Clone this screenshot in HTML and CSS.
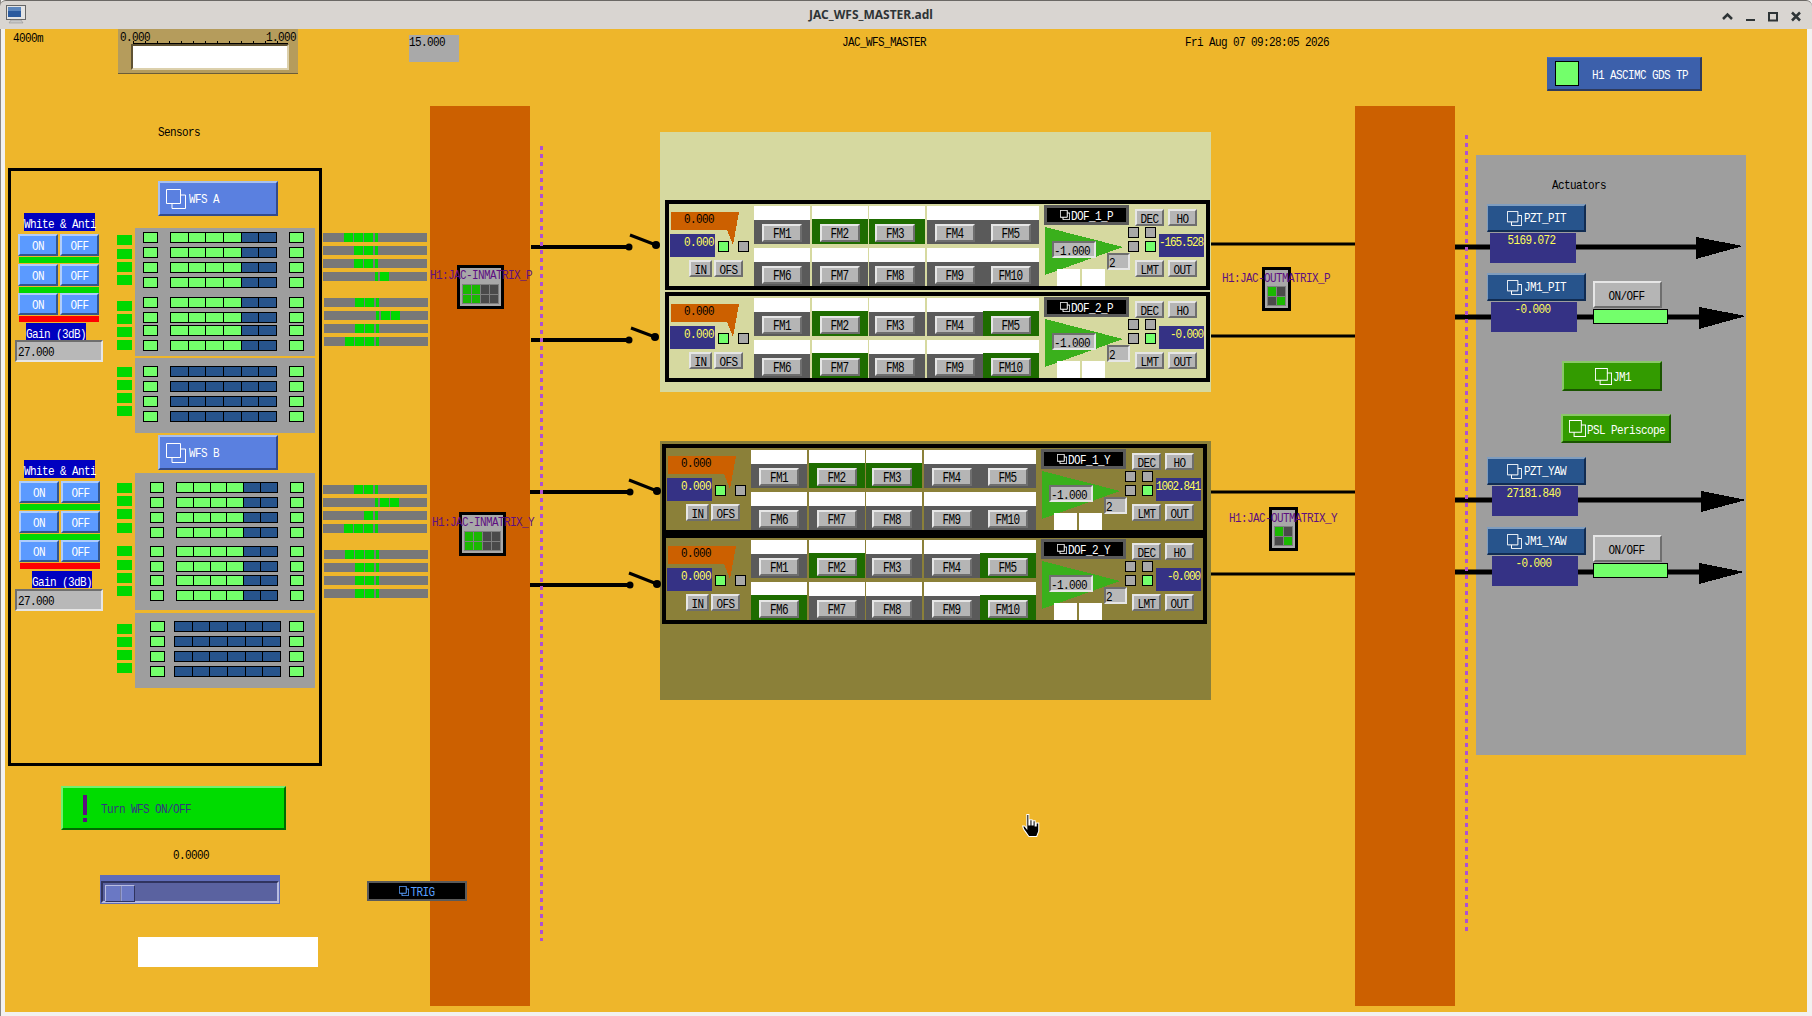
FILE: index.html
```html
<!DOCTYPE html>
<html lang="en">
<head>
    <meta charset="UTF-8">
    <title>JAC_WFS_MASTER.adl</title>
    <link rel="stylesheet" href="styles.css">
</head>
<body>
<svg class="defs" width="0" height="0">
    <symbol id="rel" viewBox="0 0 20 20">
        <path d="M0.5 0.5H14.5V14.5H0.5ZM6 14.5V19.5H19.5V6H14.5" fill="none" stroke="currentColor" vector-effect="non-scaling-stroke"/>
    </symbol>
</svg>
<div class="window">
    <header class="titlebar">
        <svg class="win-icon" width="20" height="20" viewBox="0 0 20 20">
            <rect x="0.5" y="0.5" width="19" height="14" fill="#e4e4e4" stroke="#666"/>
            <rect x="2" y="2" width="13" height="10" fill="#2b5a9e"/>
            <rect x="2" y="2" width="13" height="4" fill="#5c86bd"/>
            <path d="M5 15h10l2 3H3z" fill="#c8c8c8" stroke="#888" stroke-width="0.5"/>
        </svg>
        <div class="win-title">JAC_WFS_MASTER.adl</div>
        <div class="win-controls">
            <svg width="23" height="29" viewBox="0 0 23 29"><path d="M7 18l4.500-4.500L16 18" fill="none" stroke="#2e3436" stroke-width="2.500"/></svg>
            <svg width="23" height="29" viewBox="0 0 23 29"><path d="M7 19h9" stroke="#2e3436" stroke-width="2"/></svg>
            <svg width="23" height="29" viewBox="0 0 23 29"><rect x="7" y="12" width="8" height="7.500" fill="none" stroke="#2e3436" stroke-width="2"/></svg>
            <svg width="23" height="29" viewBox="0 0 23 29"><path d="M7 11.500l8 8M15 11.500l-8 8" stroke="#2e3436" stroke-width="2.500"/></svg>
        </div>
    </header>

    <main class="display">
        <!-- top row -->
        <div class="lbl lbl-site">4000m</div>
        <div class="meter">
            <div class="meter-scale"><span class="t">0.000</span><span class="t">1.000</span></div>
            <div class="meter-ticks"></div>
            <div class="meter-face"></div>
        </div>
        <div class="gray-val"><span class="t">15.000</span></div>
        <div class="lbl lbl-name">JAC_WFS_MASTER</div>
        <div class="lbl lbl-date">Fri Aug 07 09:28:05 2026</div>
        <div class="btn-gds"><span class="ind ind-gds"></span><span class="t">H1 ASCIMC GDS TP</span></div>

        <!-- backgrounds -->
        <div class="column column-in"></div>
        <div class="column column-out"></div>
        <div class="panel-act"></div>
        <div class="bank-panel panel-p" id="panel-p"></div>
        <div class="bank-panel panel-y" id="panel-y"></div>

        <svg class="wires" viewBox="0 0 1812 1016">
            <g stroke="#000" stroke-width="4">
                <path d="M531 247H629M531 340H629M530 492H630M530 585H630"/>
            </g>
            <g stroke="#000" stroke-width="3">
                <path d="M630 235L656 245M631 328L655 337M629 480L657 491M629 573L657 584"/>
                <path d="M1211 244H1355M1211 336H1355M1211 492H1355M1211 574H1355"/>
            </g>
            <g fill="#000">
                <circle cx="629" cy="247" r="3.500"/><circle cx="656" cy="245" r="4"/>
                <circle cx="629" cy="340" r="3.500"/><circle cx="655" cy="337" r="4"/>
                <circle cx="630" cy="492" r="3.500"/><circle cx="657" cy="491" r="4"/>
                <circle cx="630" cy="585" r="3.500"/><circle cx="657" cy="584" r="4"/>
            </g>
            <g stroke="#000" stroke-width="5">
                <path d="M1455 247H1700M1455 317H1703M1455 500H1705M1455 572H1703"/>
            </g>
            <g fill="#000" shape-rendering="crispEdges">
                <polygon points="1696,237 1743,246 1696,259"/>
                <polygon points="1699,307 1746,316 1699,329"/>
                <polygon points="1701,491 1746,500 1701,512"/>
                <polygon points="1699,563 1744,572 1699,584"/>
            </g>
            <g stroke="#ae50d2" stroke-width="3" stroke-dasharray="4 4">
                <path d="M541.500 146V941M1466.500 135V931"/>
            </g>
        </svg>

        <!-- sensors -->
        <div class="lbl lbl-sensors">Sensors</div>
        <div class="sensor-frame"></div>
        <div class="btn-blue btn-wfs-a"><svg class="rel rel-wfs"><use href="#rel"/></svg><span class="t">WFS A</span></div>
        <div class="btn-blue btn-wfs-b"><svg class="rel rel-wfs"><use href="#rel"/></svg><span class="t">WFS B</span></div>

        <div class="ctrl ctrl-a">
            <div class="ctrl-title"><span class="t">White &amp; Anti</span></div>
            <div class="onoff"><div class="btn-on"><span class="t">ON</span></div><div class="btn-on btn-off"><span class="t">OFF</span></div></div>
            <div class="state"></div>
            <div class="onoff"><div class="btn-on"><span class="t">ON</span></div><div class="btn-on btn-off"><span class="t">OFF</span></div></div>
            <div class="state state-tight"></div>
            <div class="onoff"><div class="btn-on"><span class="t">ON</span></div><div class="btn-on btn-off"><span class="t">OFF</span></div></div>
            <div class="state state-red"></div>
            <div class="ctrl-gain"><span class="t">Gain (3dB)</span></div>
            <div class="input input-gain"><span class="t">27.000</span></div>
        </div>
        <div class="ctrl ctrl-b">
            <div class="ctrl-title"><span class="t">White &amp; Anti</span></div>
            <div class="onoff"><div class="btn-on"><span class="t">ON</span></div><div class="btn-on btn-off"><span class="t">OFF</span></div></div>
            <div class="state"></div>
            <div class="onoff"><div class="btn-on"><span class="t">ON</span></div><div class="btn-on btn-off"><span class="t">OFF</span></div></div>
            <div class="state state-tight"></div>
            <div class="onoff"><div class="btn-on"><span class="t">ON</span></div><div class="btn-on btn-off"><span class="t">OFF</span></div></div>
            <div class="state state-red"></div>
            <div class="ctrl-gain"><span class="t">Gain (3dB)</span></div>
            <div class="input input-gain"><span class="t">27.000</span></div>
        </div>

        <div class="side side-a" id="side-a"></div>
        <div class="side side-b" id="side-b"></div>
        <div class="sens sens-a1" id="sens-a1"></div>
        <div class="sens sens-a2" id="sens-a2"></div>
        <div class="sens sens-b1" id="sens-b1"></div>
        <div class="sens sens-b2" id="sens-b2"></div>
        <div class="strips strips-a1" id="strips-a1"></div>
        <div class="strips strips-a2" id="strips-a2"></div>
        <div class="strips strips-b1" id="strips-b1"></div>
        <div class="strips strips-b2" id="strips-b2"></div>

        <!-- matrices -->
        <div class="matrix matrix-in matrix-in-p"><div class="mx-grid mx-4"><i class="on"></i><i class="on"></i><i></i><i></i><i class="on"></i><i class="on"></i><i></i><i></i></div></div>
        <div class="matrix matrix-in matrix-in-y"><div class="mx-grid mx-4"><i class="on"></i><i class="on"></i><i></i><i></i><i class="on"></i><i class="on"></i><i></i><i></i></div></div>
        <div class="matrix matrix-out matrix-out-p"><div class="mx-grid mx-2"><i class="on"></i><i></i><i></i><i class="on"></i></div></div>
        <div class="matrix matrix-out matrix-out-y"><div class="mx-grid mx-2"><i class="on"></i><i></i><i></i><i class="on"></i></div></div>
        <div class="lbl lbl-mx lbl-in-p">H1:JAC-INMATRIX_P</div>
        <div class="lbl lbl-mx lbl-in-y">H1:JAC-INMATRIX_Y</div>
        <div class="lbl lbl-mx lbl-out-p">H1:JAC-OUTMATRIX_P</div>
        <div class="lbl lbl-mx lbl-out-y">H1:JAC-OUTMATRIX_Y</div>

        <!-- actuators -->
        <div class="lbl lbl-act">Actuators</div>
        <div class="btn-act btn-pzt-pit"><svg class="rel rel-act"><use href="#rel"/></svg><span class="t">PZT_PIT</span></div>
        <div class="act-val val-pzt-pit"><span class="t">5169.072</span></div>
        <div class="btn-act btn-jm1-pit"><svg class="rel rel-act"><use href="#rel"/></svg><span class="t">JM1_PIT</span></div>
        <div class="act-val val-jm1-pit"><span class="t">-0.000</span></div>
        <div class="btn btn-onoff btn-onoff-pit"><span class="t">ON/OFF</span></div>
        <div class="ind ind-act ind-act-pit"></div>
        <div class="btn-green btn-jm1"><svg class="rel rel-green"><use href="#rel"/></svg><span class="t">JM1</span></div>
        <div class="btn-green btn-psl"><svg class="rel rel-green"><use href="#rel"/></svg><span class="t">PSL Periscope</span></div>
        <div class="btn-act btn-pzt-yaw"><svg class="rel rel-act"><use href="#rel"/></svg><span class="t">PZT_YAW</span></div>
        <div class="act-val val-pzt-yaw"><span class="t">27181.840</span></div>
        <div class="btn-act btn-jm1-yaw"><svg class="rel rel-act"><use href="#rel"/></svg><span class="t">JM1_YAW</span></div>
        <div class="act-val val-jm1-yaw"><span class="t">-0.000</span></div>
        <div class="btn btn-onoff btn-onoff-yaw"><span class="t">ON/OFF</span></div>
        <div class="ind ind-act ind-act-yaw"></div>

        <!-- bottom left -->
        <div class="btn-turn"><span class="bang"><i></i><i></i></span><span class="t">Turn WFS ON/OFF</span></div>
        <div class="lbl lbl-zero">0.0000</div>
        <div class="slider"><div class="trough"><div class="thumb"></div></div></div>
        <div class="btn-trig"><svg class="rel rel-small"><use href="#rel"/></svg><span class="t">TRIG</span></div>
        <div class="white-box"></div>

        <svg class="hand" width="22" height="25" viewBox="0 0 20 24">
            <path d="M5 1.500h2v10h1V6.500h2v5h1V7.500h2v5h1V9.500h2.500v8l-2 5H7l-5-7-1-3h2l2 2.500z" fill="#000" stroke="#fff"/>
        </svg>
    </main>
</div>
<script src="script.js"></script>
</body>
</html>
```

FILE: styles.css
```css
* {
    box-sizing: border-box;
}
body {
    margin: 0;
    background-color: #f2f1f0;
    font-family: "Liberation Mono", monospace;
    font-size: 11px;
    letter-spacing: -0.6px;
    line-height: 12px;
    color: #000;
}
.defs {
    position: absolute;
}
/* .display stays static so that canvas items are placed in window coordinates */
.window {
    position: relative;
    width: 1812px;
    height: 1016px;
    display: flex;
    flex-direction: column;
    overflow: hidden;
    background-color: #f2f1f0;
    box-shadow: inset 1px 0 #8a8784;
}
.titlebar {
    height: 29px;
    display: flex;
    align-items: center;
    background-color: #d9d5d1;
    border-top: 1px solid #6b6865;
    border-top-left-radius: 6px;
    border-top-right-radius: 6px;
}
.win-icon {
    margin-left: 6px;
    margin-right: 4px;
    flex: none;
}
.win-title {
    flex: 1;
    text-align: center;
    font-family: "Noto Sans", sans-serif;
    font-weight: bold;
    font-size: 12px;
    letter-spacing: 0;
    line-height: 30px;
    color: #2e3436;
}
.win-controls {
    width: 100px;
    padding: 0 4px;
    height: 28px;
    display: flex;
    flex: none;
}
.display {
    flex: 1;
    margin: 0 5px 4px 5px;
    background-color: #eeb62b;
}
.display > * {
    position: absolute;
}
.t {
    display: inline-block;
    transform: translateY(1px) scaleY(1.2);
    white-space: pre;
}
.rel {
    flex: none;
    display: block;
    color: #fff;
}

/* plain labels */
.lbl {
    white-space: pre;
    transform: scaleY(1.2);
}
.lbl-site { left: 13px; top: 32px; }
.lbl-name { left: 842px; top: 36px; }
.lbl-date { left: 1185px; top: 36px; }
.lbl-sensors { left: 158px; top: 126px; }
.lbl-act { left: 1552px; top: 179px; }
.lbl-zero { left: 173px; top: 849px; }
.lbl-mx { color: #5e0f80; }
.lbl-in-p { left: 430px; top: 269px; }
.lbl-in-y { left: 432px; top: 516px; }
.lbl-out-p { left: 1222px; top: 272px; }
.lbl-out-y { left: 1229px; top: 512px; }

/* meter */
.meter {
    left: 118px;
    top: 29px;
    width: 180px;
    height: 45px;
    display: flex;
    flex-direction: column;
    background-color: #b59c5c;
    border-bottom: 1px solid #6b5c38;
}
.meter-scale {
    display: flex;
    justify-content: space-between;
    padding: 1px 2px 0;
    height: 12px;
}
.meter-ticks {
    height: 3px;
    margin: 0 10px 0 15px;
    border-bottom: 1px solid #000;
    background-image: repeating-linear-gradient(to right, #000 0, #000 1px, transparent 1px, transparent 12px);
}
.meter-face {
    height: 26px;
    margin: 0 9px 0 13px;
    background-color: #fff;
    border: 2px solid;
    border-color: #5f5233 #dcd0ac #dcd0ac #5f5233;
}
.gray-val {
    left: 409px;
    top: 35px;
    width: 50px;
    height: 27px;
    background-color: #a9a9a9;
    line-height: 13px;
}

/* blocks */
.column {
    top: 106px;
    height: 900px;
    background-color: #cc6000;
}
.column-in { left: 430px; width: 100px; }
.column-out { left: 1355px; width: 100px; }
.panel-act {
    left: 1476px;
    top: 155px;
    width: 270px;
    height: 600px;
    background-color: #9e9e9e;
}
.wires {
    left: 0;
    top: 0;
    width: 1812px;
    height: 1016px;
}
.white-box {
    left: 138px;
    top: 937px;
    width: 180px;
    height: 30px;
    background-color: #fff;
}
.hand {
    left: 1021px;
    top: 813px;
}

/* bevel buttons */
.btn {
    display: flex;
    align-items: center;
    justify-content: center;
    background-color: #b5b5b5;
    border: 2px solid;
    border-color: #e6e6e6 #6e6e6e #6e6e6e #e6e6e6;
}
.input {
    display: flex;
    align-items: center;
    background-color: #b8b8b8;
    border: 2px solid;
    border-color: #6e6e6e #e6e6e6 #e6e6e6 #6e6e6e;
}
.ind {
    display: block;
    border: 1px solid #000;
    background-color: #73ff6b;
}
.ind-off {
    background-color: #a8a8a8;
}
.btn-gds {
    left: 1547px;
    top: 57px;
    width: 155px;
    height: 34px;
    display: flex;
    align-items: center;
    gap: 13px;
    padding-left: 7px;
    color: #fff;
    background-color: #3c60ab;
    border: 1px solid;
    border-color: #4a6fc0 #2e3a5c #2e3a5c #3c60ab;
    border-width: 1px 2px 2px 1px;
}
.ind-gds {
    width: 24px;
    height: 25px;
}
.btn-blue {
    left: 158px;
    width: 120px;
    height: 35px;
    display: flex;
    align-items: center;
    padding-left: 6px;
    gap: 3px;
    color: #fff;
    background-color: #5a80e0;
    border: 2px solid;
    border-color: #a8c0f0 #334a8c #334a8c #a8c0f0;
}
.btn-blue .t, .btn-act .t {
    transform: scaleY(1.2);
}
.btn-wfs-a { top: 181px; }
.btn-wfs-b { top: 435px; }
.rel-wfs { width: 20px; height: 20px; }
.rel-act { width: 15px; height: 15px; }
.rel-green { width: 17px; height: 17px; }
.rel-small { width: 10px; height: 10px; }

/* sensors */
.sensor-frame {
    left: 8px;
    top: 168px;
    width: 314px;
    height: 598px;
    border: 3px solid #000;
}
.ctrl {
    display: flex;
    flex-direction: column;
    align-items: flex-start;
    color: #fff;
}
.ctrl-a { left: 18px; top: 213px; }
.ctrl-b { left: 19px; top: 460px; }
.ctrl-title {
    width: 71px;
    height: 18px;
    margin: 0 0 3px 6px;
    text-align: center;
    line-height: 20px;
    background-color: #0000c0;
}
.ctrl-b .ctrl-title {
    margin-left: 5px;
}
.onoff {
    display: flex;
    gap: 2px;
}
.btn-on {
    width: 40px;
    height: 22px;
    display: flex;
    align-items: center;
    justify-content: center;
    background-color: #5b9aff;
    border: 2px solid;
    border-color: #b0cdfb #33558c #33558c #b0cdfb;
}
.btn-off {
    width: 39px;
}
.state {
    width: 80px;
    height: 6px;
    margin: 1px 0 1px 1px;
    background-color: #00d800;
}
.state-tight {
    margin-bottom: 0;
}
.state-red {
    background-color: #ff0000;
}
.ctrl-gain {
    width: 60px;
    height: 17px;
    margin: 0 0 0 8px;
    overflow: hidden;
    text-align: center;
    line-height: 20px;
    background-color: #0000c0;
}
.ctrl-b .ctrl-gain {
    margin: 1px 0 1px 13px;
}
.input-gain {
    width: 88px;
    height: 22px;
    margin-left: -3px;
    padding-left: 1px;
    color: #000;
}
.ctrl-b .input-gain {
    margin-left: -4px;
}
.side {
    left: 117px;
    width: 15px;
    display: flex;
    flex-direction: column;
}
.side i {
    display: block;
    height: 10px;
    flex: none;
    background-color: #00d800;
}
.side-a { top: 235px; }
.side-b { top: 483px; }
.sens {
    left: 135px;
    width: 180px;
    display: flex;
    flex-direction: column;
    background-color: #9e9e9e;
}
.sens-a1 { top: 228px; height: 128px; }
.sens-a2 { top: 358px; height: 75px; }
.sens-b1 { top: 473px; height: 137px; }
.sens-b2 { top: 613px; height: 75px; }
.sens-row {
    display: flex;
    height: 11px;
    flex: none;
    padding-left: 8px;
}
.sens-row .ind {
    width: 15px;
}
.cells {
    width: 107px;
    margin: 0 12px;
    display: flex;
    border: 1px solid #000;
}
.cells i {
    flex: 1;
    background-color: #27548c;
    border-left: 1px solid #000;
}
.cells i:first-child {
    border-left: 0;
}
.cells i.on {
    background-color: #73ff6b;
}
.sens-b1 .sens-row { padding-left: 15px; }
.sens-b1 .sens-row .ind { width: 14px; }
.sens-b1 .cells { width: 102px; }
.sens-b2 .sens-row { padding-left: 15px; }
.sens-b2 .cells { width: 107px; margin: 0 8px 0 9px; }

.strips {
    width: 104px;
    display: flex;
    flex-direction: column;
    gap: 4px;
}
.strips-a1 { left: 323px; top: 233px; }
.strips-a2 { left: 324px; top: 298px; }
.strips-b1 { left: 323px; top: 485px; }
.strips-b2 { left: 324px; top: 550px; }
.strip {
    height: 9px;
    display: flex;
    gap: 1px;
    padding-left: 21px;
    background-color: #787878;
}
.strip i {
    width: 9px;
}
.strip i:nth-child(4) {
    width: 3px;
    margin: 0 1px;
}
.strip i.on {
    background-color: #00d800;
}

/* matrices */
.matrix {
    border: 3px solid #000;
    background-color: #a8a8a8;
    padding: 16px 2px 2px;
}
.matrix-in { width: 47px; height: 44px; }
.matrix-out { width: 29px; height: 44px; }
.matrix-in-p { left: 457px; top: 265px; }
.matrix-in-y { left: 459px; top: 512px; }
.matrix-out-p { left: 1262px; top: 267px; }
.matrix-out-y { left: 1269px; top: 507px; }
.mx-grid {
    display: grid;
    height: 20px;
    gap: 1px;
    padding: 1px;
    background-color: #7f7f7f;
}
.mx-4 { grid-template-columns: repeat(4, 1fr); }
.mx-2 { grid-template-columns: repeat(2, 1fr); }
.mx-grid i { background-color: #4a4a4a; }
.mx-grid i.on { background-color: #1ab800; }

/* filter banks */
.bank-panel {
    left: 660px;
    width: 551px;
    display: flex;
    flex-direction: column;
}
.panel-p {
    top: 132px;
    height: 260px;
    padding: 68px 0 0 5px;
    gap: 2px;
    background-color: #d6d9a0;
}
.panel-y {
    top: 441px;
    height: 259px;
    padding: 3px 0 0 2px;
    background-color: #8b8039;
}
.bank {
    width: 545px;
    height: 90px;
    flex: none;
    display: flex;
    border: 4px solid #000;
}
.bank-offset {
    position: relative;
    width: 85px;
    flex: none;
}
.bank-fm {
    width: 285px;
    flex: none;
    display: flex;
    flex-direction: column;
    gap: 4px;
    padding-top: 2px;
    margin-right: 5px;
}
.bank-gain {
    position: relative;
    flex: 1;
}
.bank-offset > *, .bank-gain > * {
    position: absolute;
}
.sum-box {
    left: 2px;
    top: 8px;
    width: 56px;
    height: 18px;
    padding-left: 13px;
    line-height: 12px;
    background-color: #cc6000;
}
.sum-wedge {
    left: 58px;
    top: 8px;
}
.val-box {
    width: 45px;
    height: 23px;
    padding: 0 1px 0 0;
    text-align: right;
    line-height: 14px;
    color: #ffff5a;
    background-color: #353285;
    white-space: pre;
}
.val-in { left: 1px; top: 30px; }
.val-out { left: 115px; top: 30px; letter-spacing: -1.1px; }
.ind-s {
    width: 11px;
    height: 11px;
}
.ind-s1 { left: 49px; top: 37px; }
.ind-s2 { left: 69px; top: 37px; }
.btn-s {
    height: 17px;
}
.btn-in { left: 20px; top: 56px; width: 23px; }
.btn-ofs { left: 45px; top: 56px; width: 29px; }
.fm-row {
    display: flex;
}
.fm {
    width: 56px;
    flex: none;
    margin-left: 1.5px;
}
.fm:first-child, .fm:last-child {
    margin-left: 0;
}
.fm-top {
    height: 14px;
    background-color: #fff;
}
.fm-body {
    height: 24px;
    padding-top: 4px;
    display: flex;
    justify-content: center;
    background-color: #5a5a5a;
}
.fm.on .fm-top {
    height: 13px;
}
.fm.on .fm-body {
    height: 25px;
    padding-top: 5px;
    background-color: #1e6c00;
}
.fm-btn {
    width: 40px;
    height: 18px;
}
.fm .t {
    transform: translateY(1px) scaleY(1.35);
}
.fm:nth-child(3) .fm-btn {
    margin-right: 4px;
}
.dof {
    left: 0;
    top: 1px;
    width: 85px;
    height: 20px;
    display: flex;
    align-items: center;
    justify-content: center;
    gap: 1px;
    color: #fff;
    background-color: #000;
    border: 3px solid #5a5a5a;
}
.gain-tri {
    left: 1px;
    top: 23px;
}
.gain-val {
    left: 8px;
    top: 37px;
    width: 44px;
    height: 17px;
}
.gain-n {
    left: 63px;
    top: 49px;
    width: 23px;
    height: 17px;
}
.blank {
    top: 65px;
    width: 23px;
    height: 17px;
    background-color: #fff;
}
.blank-1 { left: 13px; }
.blank-2 { left: 38px; }
.btn-d {
    width: 29px;
    height: 17px;
}
.btn-dec { left: 91px; top: 5px; }
.btn-ho { left: 124px; top: 5px; }
.btn-lmt { left: 91px; top: 56px; }
.btn-out { left: 124px; top: 56px; }
.ind-d1 { left: 84px; top: 23px; }
.ind-d2 { left: 101px; top: 23px; }
.ind-d3 { left: 84px; top: 37px; }
.ind-d4 { left: 101px; top: 37px; }

/* actuators */
.btn-act {
    left: 1487px;
    width: 99px;
    height: 28px;
    display: flex;
    align-items: center;
    padding-left: 19px;
    gap: 2px;
    color: #fff;
    background-color: #27548c;
    border: 1px solid;
    border-width: 2px 2px 2px 1px;
    border-color: #7f9dbf #112c52 #112c52 #7f9dbf;
}
.btn-pzt-pit { top: 204px; }
.btn-jm1-pit { top: 273px; }
.btn-pzt-yaw { top: 457px; }
.btn-jm1-yaw { top: 527px; }
.act-val {
    width: 86px;
    height: 30px;
    padding-right: 3px;
    text-align: center;
    line-height: 12px;
    color: #ffff5a;
    background-color: #353285;
}
.val-pzt-pit { left: 1490px; top: 233px; }
.val-jm1-pit { left: 1491px; top: 302px; }
.val-pzt-yaw { left: 1492px; top: 486px; }
.val-jm1-yaw { left: 1492px; top: 556px; }
.btn-onoff {
    left: 1593px;
    width: 69px;
    height: 27px;
    padding-right: 2px;
}
.btn-onoff-pit { top: 281px; }
.btn-onoff-yaw { top: 535px; }
.ind-act {
    left: 1593px;
    width: 75px;
    height: 15px;
}
.ind-act-pit { top: 309px; }
.ind-act-yaw { top: 563px; }
.btn-green {
    display: flex;
    align-items: center;
    color: #fff;
    background-color: #339b00;
    border: 2px solid;
    border-color: #8ac868 #1a5500 #1a5500 #8ac868;
    gap: 1px;
}
.btn-jm1 {
    left: 1562px;
    top: 361px;
    width: 100px;
    height: 30px;
    padding-left: 31px;
}
.btn-psl {
    left: 1561px;
    top: 414px;
    width: 110px;
    height: 29px;
    padding-left: 6px;
}

/* bottom left */
.btn-turn {
    left: 61px;
    top: 786px;
    width: 225px;
    height: 44px;
    display: flex;
    align-items: center;
    gap: 14px;
    padding-left: 20px;
    color: #353285;
    background-color: #00dc00;
    border: 2px solid;
    border-color: #70f070 #006c00 #006c00 #70f070;
}
.bang {
    width: 4px;
    height: 27px;
    display: flex;
    flex-direction: column;
    justify-content: space-between;
}
.bang i {
    height: 20px;
    background-color: #5e0f80;
}
.bang i + i {
    height: 4px;
}
.slider {
    left: 100px;
    top: 875px;
    width: 180px;
    height: 29px;
    padding: 6px 1px 1px;
    background-color: #5f6cb8;
}
.trough {
    height: 22px;
    padding: 2px;
    background-color: #5a62a0;
    border: 2px solid;
    border-color: #30345f #b8bce0 #b8bce0 #30345f;
}
.thumb {
    width: 30px;
    height: 17px;
    background-color: #6a78c4;
    background-image: linear-gradient(to right, transparent 14px, #30345f 14px, #b8bce0 15px, transparent 16px);
    border: 1px solid;
    border-color: #b8bce0 #30345f #30345f #b8bce0;
}
.btn-trig {
    left: 367px;
    top: 881px;
    width: 100px;
    height: 20px;
    display: flex;
    align-items: center;
    justify-content: center;
    gap: 1px;
    color: #5aa0ff;
    background-color: #000;
    border: 2px solid #5a5a5a;
}
.btn-trig .rel {
    color: #5aa0ff;
}
```

FILE: script.js
```js
// data for the repeating parts of the screen
const banks = [
    { panel: 'panel-p', name: 'DOF_1_P', on: [2, 3], out: '-165.528' },
    { panel: 'panel-p', name: 'DOF_2_P', on: [2, 5, 7, 10], out: '-0.000' },
    { panel: 'panel-y', name: 'DOF_1_Y', on: [2, 3], out: '1002.841' },
    { panel: 'panel-y', name: 'DOF_2_Y', on: [2, 5, 6, 10], out: '-0.000' }
];

function btn(label, cls) {
    return `<div class="btn ${cls}"><span class="t">${label}</span></div>`;
}

function fmRow(from, on) {
    let html = '<div class="fm-row">';
    for (let n = from; n < from + 5; n++) {
        html += `<div class="fm${on.includes(n) ? ' on' : ''}"><div class="fm-top"></div><div class="fm-body">${btn('FM' + n, 'fm-btn')}</div></div>`;
    }
    return html + '</div>';
}

banks.forEach(b => {
    const bank = document.createElement('div');
    bank.className = 'bank';
    bank.innerHTML = `
        <div class="bank-offset">
            <div class="sum-box"><span class="t">0.000</span></div>
            <svg class="sum-wedge" width="12" height="33" viewBox="0 0 12 33" shape-rendering="crispEdges"><polygon points="0,0 12,0 6,33 0,18" fill="#cc6000"/></svg>
            <div class="val-box val-in"><span class="t">0.000</span></div>
            <span class="ind ind-s ind-s1"></span>
            <span class="ind ind-off ind-s ind-s2"></span>
            ${btn('IN', 'btn-s btn-in')}
            ${btn('OFS', 'btn-s btn-ofs')}
        </div>
        <div class="bank-fm">${fmRow(1, b.on)}${fmRow(6, b.on)}</div>
        <div class="bank-gain">
            <div class="dof"><svg class="rel rel-small"><use href="#rel"/></svg><span class="t">${b.name}</span></div>
            <svg class="gain-tri" width="78" height="48" viewBox="0 0 78 48" shape-rendering="crispEdges"><polygon points="0,0 78,20 0,48" fill="#3ab01c"/></svg>
            <div class="input gain-val"><span class="t">-1.000</span></div>
            <div class="input gain-n"><span class="t">2</span></div>
            <div class="blank blank-1"></div>
            <div class="blank blank-2"></div>
            ${btn('DEC', 'btn-d btn-dec')}
            ${btn('HO', 'btn-d btn-ho')}
            ${btn('LMT', 'btn-d btn-lmt')}
            ${btn('OUT', 'btn-d btn-out')}
            <span class="ind ind-off ind-s ind-d1"></span>
            <span class="ind ind-off ind-s ind-d2"></span>
            <span class="ind ind-off ind-s ind-d3"></span>
            <span class="ind ind-s ind-d4"></span>
            <div class="val-box val-out"><span class="t">${b.out}</span></div>
        </div>`;
    document.getElementById(b.panel).appendChild(bank);
});

// rows with irregular spacing: y values from the screen, turned into margins
function stack(id, tag, top, ys, height, inner) {
    const box = document.getElementById(id);
    let y = top;
    ys.forEach(rowY => {
        const el = document.createElement(tag);
        el.innerHTML = inner;
        if (tag === 'div') el.className = 'sens-row';
        el.style.marginTop = (rowY - y) + 'px';
        box.appendChild(el);
        y = rowY + height;
    });
}

stack('side-a', 'i', 235, [235, 249, 262, 275, 301, 314, 327, 340, 367, 380, 393, 406], 10, '');
stack('side-b', 'i', 483, [483, 496, 509, 523, 546, 560, 573, 586, 624, 637, 650, 663], 10, '');

function cells(count) {
    let html = '';
    for (let i = 0; i < 6; i++) {
        html += `<i${i < count ? ' class="on"' : ''}></i>`;
    }
    return `<span class="ind"></span><div class="cells">${html}</div><span class="ind"></span>`;
}

stack('sens-a1', 'div', 228, [232, 247, 262, 277, 297, 312, 325, 340], 11, cells(4));
stack('sens-a2', 'div', 358, [366, 381, 396, 411], 11, cells(0));
stack('sens-b1', 'div', 473, [482, 497, 512, 527, 546, 561, 575, 590], 11, cells(4));
stack('sens-b2', 'div', 613, [621, 636, 651, 666], 11, cells(0));

// green slots lit on each strip
const strips = {
    'strips-a1': ['111100', '011100', '011100', '000110'],
    'strips-a2': ['011100', '000111', '011100', '111100'],
    'strips-b1': ['011100', '000111', '001100', '111100'],
    'strips-b2': ['111100', '011100', '011100', '011100']
};

Object.keys(strips).forEach(id => {
    document.getElementById(id).innerHTML = strips[id].map(row => {
        const slots = row.split('').map(c => `<i${c === '1' ? ' class="on"' : ''}></i>`).join('');
        return `<div class="strip">${slots}</div>`;
    }).join('');
});
```
